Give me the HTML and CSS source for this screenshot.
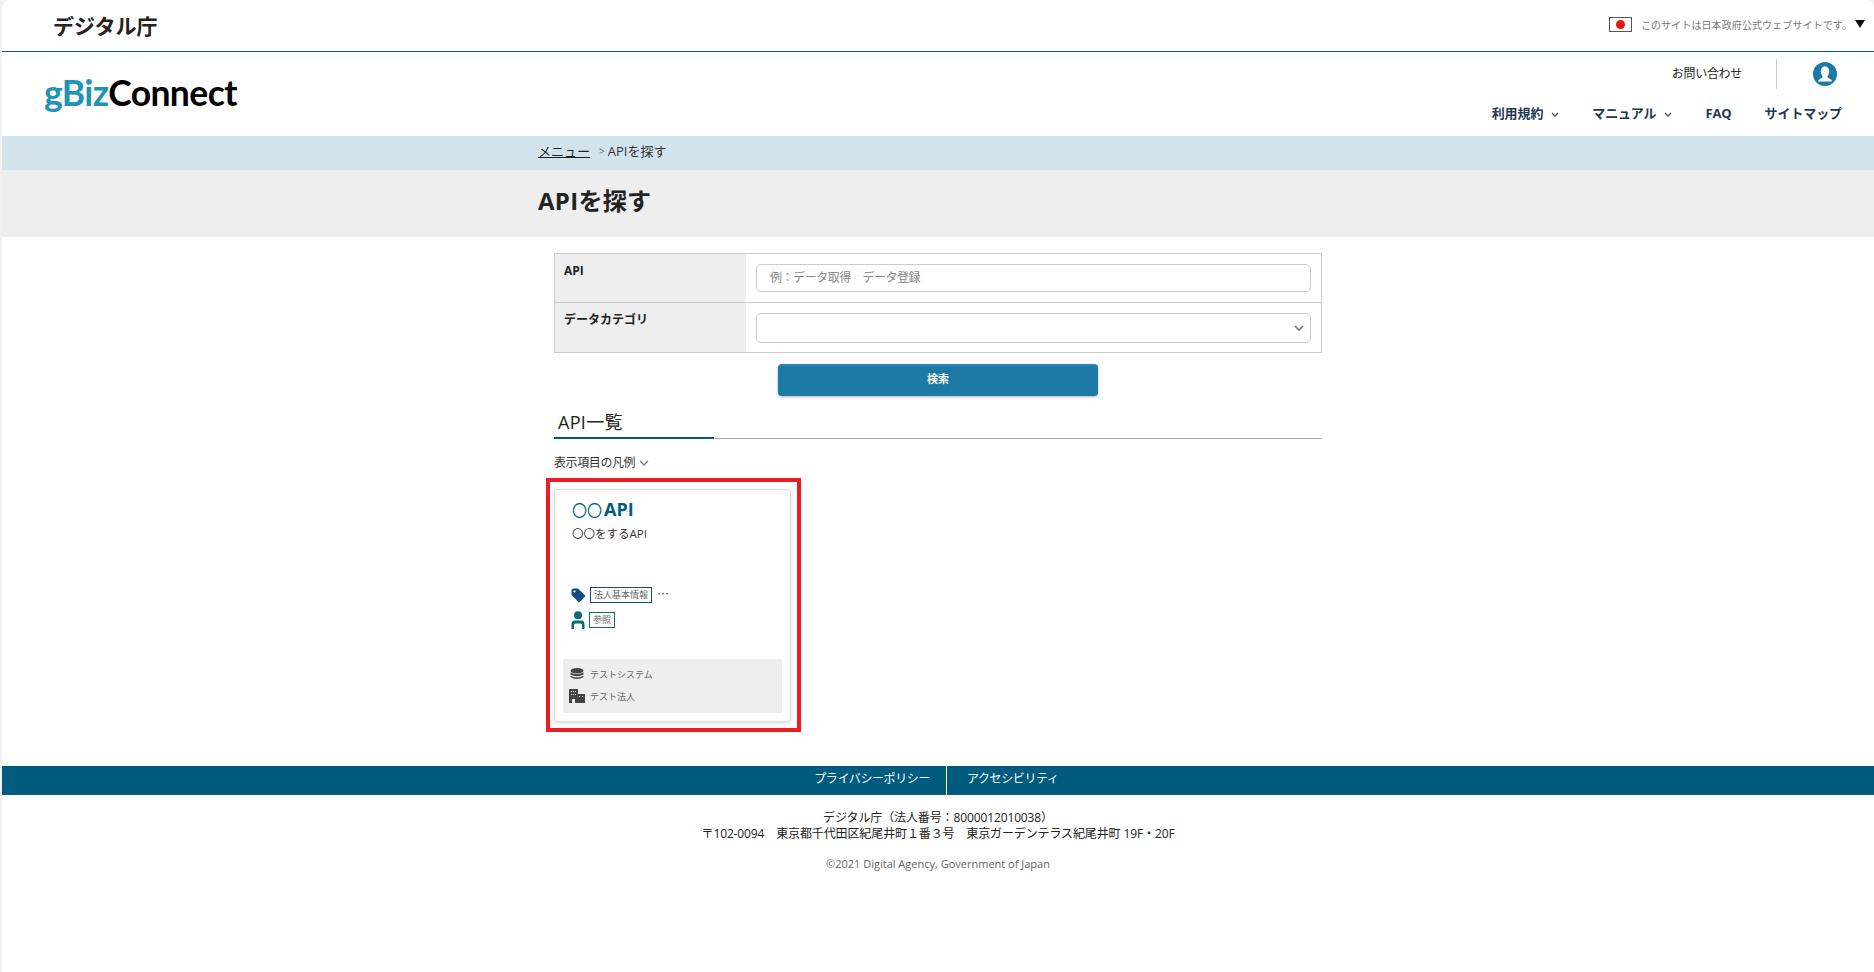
FILE: index.html
```html
<!DOCTYPE html>
<html lang="ja">
<head>
    <meta charset="UTF-8">
    <meta name="viewport" content="width=device-width, initial-scale=1.0">
    <title>APIを探す</title>
    <link rel="stylesheet" href="styles.css">
</head>
<body>
    <div class="page">
        <div class="gov-bar">
            <div class="gov-name">デジタル庁</div>
            <div class="gov-note">
                <span class="flag"><span class="flag-sun"></span></span>
                <span class="gov-text">このサイトは日本政府公式ウェブサイトです。</span>
                <span class="gov-arrow"></span>
            </div>
        </div>

        <header class="site-header">
            <div class="logo"><span class="logo-biz">gBiz</span>Connect</div>
            <div class="header-right">
                <div class="header-top">
                    <a class="contact">お問い合わせ</a>
                    <span class="header-rule"></span>
                    <svg class="user-icon" width="24" height="24" viewBox="0 0 24 24">
                        <circle cx="12" cy="12" r="12" fill="#1b79a6"/>
                        <ellipse cx="12" cy="9.5" rx="4.3" ry="5.2" fill="#fff"/>
                        <path d="M9.8 13.5 L14.2 13.5 L15 16 Q18.5 17 19 19.5 L5 19.5 Q5.5 17 9 16 Z" fill="#fff"/>
                    </svg>
                </div>
                <nav class="main-nav">
                    <a>利用規約<svg class="chev" width="8" height="6" viewBox="0 0 8 6"><path d="M1 1 L4 4 L7 1" fill="none" stroke="#555" stroke-width="1.4"/></svg></a>
                    <a>マニュアル<svg class="chev" width="8" height="6" viewBox="0 0 8 6"><path d="M1 1 L4 4 L7 1" fill="none" stroke="#555" stroke-width="1.4"/></svg></a>
                    <a>FAQ</a>
                    <a>サイトマップ</a>
                </nav>
            </div>
        </header>

        <div class="crumb-band">
            <div class="inner crumbs"><a class="crumb-link">メニュー</a><span class="crumb-sep">&gt;</span><span>APIを探す</span></div>
        </div>
        <div class="title-band">
            <h1 class="inner page-title">APIを探す</h1>
        </div>

        <main class="content">
            <div class="search-table">
                <div class="search-row">
                    <div class="search-label">API</div>
                    <div class="search-cell"><div class="field placeholder">例：データ取得　データ登録</div></div>
                </div>
                <div class="search-row">
                    <div class="search-label">データカテゴリ</div>
                    <div class="search-cell search-cell-last">
                        <div class="field select-field">
                            <svg width="10" height="7" viewBox="0 0 10 7"><path d="M1 1 L5 5 L9 1" fill="none" stroke="#777" stroke-width="1.6"/></svg>
                        </div>
                    </div>
                </div>
            </div>

            <div class="button-row"><button class="search-btn" type="button">検索</button></div>

            <h2 class="section-title"><span>API一覧</span></h2>

            <div class="legend">表示項目の凡例<svg width="10" height="7" viewBox="0 0 10 7"><path d="M1 1 L5 5 L9 1" fill="none" stroke="#777" stroke-width="1.3"/></svg></div>

            <div class="highlight">
                <div class="api-card">
                    <div class="card-main">
                        <div class="card-title"><span class="circles">〇〇</span>API</div>
                        <p class="card-desc">〇〇をするAPI</p>
                        <div class="tag-row tag-row-first">
                            <svg width="15" height="15" viewBox="0 0 15 15"><path d="M0.5 3 Q0.5 0.5 3 0.5 L7 0.5 L14.5 8 L8 14.5 L0.5 7 Z" fill="#0f4c81"/><circle cx="3.5" cy="3.5" r="1.1" fill="#fff"/></svg>
                            <span class="tag tag-blue">法人基本情報</span>
                            <span class="more">…</span>
                        </div>
                        <div class="tag-row">
                            <svg width="14" height="18" viewBox="0 0 14 18"><circle cx="7" cy="4.2" r="4" fill="#0b6a78"/><path d="M0.5 18 L0.5 13 Q0.5 9.5 4 9.5 L10 9.5 Q13.5 9.5 13.5 13 L13.5 18 L11 18 L11 14 Q11 12.5 9.5 12.5 L4.5 12.5 Q3 12.5 3 14 L3 18 Z" fill="#0b6a78"/></svg>
                            <span class="tag tag-teal">参照</span>
                        </div>
                    </div>
                    <div class="card-meta">
                        <div class="meta-row">
                            <svg width="14" height="12" viewBox="0 0 14 12"><ellipse cx="7" cy="2.8" rx="6.5" ry="2.8" fill="#444"/><path d="M0.5 4.5 Q7 8 13.5 4.5 L13.5 6.5 Q7 10 0.5 6.5 Z" fill="#444"/><path d="M0.5 7.8 Q7 11 13.5 7.8 L13.5 9 Q7 13 0.5 9 Z" fill="#444"/></svg>
                            <span>テストシステム</span>
                        </div>
                        <div class="meta-row">
                            <svg width="16" height="14" viewBox="0 0 16 14"><path d="M0 0 H9 V5 H16 V14 H6 V10 H3 V14 H0 Z" fill="#444"/><path d="M2 2 H3 V3 H2 Z M4 2 H5 V3 H4 Z M6 2 H7 V3 H6 Z M2 5 H3 V6 H2 Z M4 5 H5 V6 H4 Z M6 5 H7 V6 H6 Z M10 7 H11 V8 H10 Z M13 7 H14 V8 H13 Z" fill="#eee"/></svg>
                            <span>テスト法人</span>
                        </div>
                    </div>
                </div>
            </div>
        </main>

        <footer class="site-footer">
            <div class="footer-links">
                <a class="footer-link-left">プライバシーポリシー</a>
                <a class="footer-link-right">アクセシビリティ</a>
            </div>
            <div class="footer-address">
                <p>デジタル庁（法人番号：8000012010038）</p>
                <p>〒102-0094　東京都千代田区紀尾井町１番３号　東京ガーデンテラス紀尾井町 19F・20F</p>
            </div>
            <p class="copyright">©2021 Digital Agency, Government of Japan</p>
        </footer>
    </div>
</body>
</html>
```

FILE: styles.css
```css
* {
    box-sizing: border-box;
}
html, body {
    height: 100%;
}
body {
    margin: 0;
    padding-left: 2px;
    background-color: #f1f1f1;
    color: #222;
    font-family: "Open Sans", "Noto Sans CJK JP", sans-serif;
    font-size: 13px;
}
p, h1, h2 {
    margin: 0;
}
.page {
    min-height: 100%;
    background-color: #fff;
    border-radius: 8px 8px 0 0;
}

/* top bar */
.gov-bar {
    height: 52px;
    display: flex;
    justify-content: space-between;
    align-items: center;
    padding: 0 9px 3px 51px;
    border-bottom: 1px solid #005c7f;
}
.gov-name {
    padding-top: 5px;
    font-size: 21px;
    font-weight: 700;
    line-height: 1;
    color: #222;
}
.gov-note {
    display: flex;
    align-items: center;
}
.flag {
    width: 23px;
    height: 15px;
    margin-right: 9px;
    border: 1px solid #555;
    display: flex;
    justify-content: center;
    align-items: center;
}
.flag-sun {
    width: 9px;
    height: 9px;
    border-radius: 50%;
    background-color: #e8141c;
}
.gov-text {
    font-size: 10px;
    letter-spacing: 0.1px;
    color: #777;
}
.gov-arrow {
    width: 0;
    height: 0;
    margin-left: 3px;
    border-left: 5px solid transparent;
    border-right: 5px solid transparent;
    border-top: 8px solid #111;
}

/* header */
.site-header {
    height: 84px;
    display: flex;
    justify-content: space-between;
    padding: 0 32px 0 42px;
}
.logo {
    margin-top: 19px;
    font-family: "Lato", sans-serif;
    font-size: 35.5px;
    font-weight: 700;
    line-height: 44px;
    letter-spacing: -0.6px;
    color: #000;
}
.logo-biz {
    color: #2193b5;
}
.header-right {
    display: flex;
    flex-direction: column;
    align-items: flex-end;
}
.header-top {
    display: flex;
    align-items: center;
    height: 30px;
    margin-top: 7px;
    padding-right: 5px;
}
.contact {
    padding-bottom: 3px;
    font-size: 12px;
    letter-spacing: -0.3px;
    color: #222;
}
.header-rule {
    width: 1px;
    height: 30px;
    margin: 0 36px 0 34px;
    background-color: #ccc;
}
.main-nav {
    display: flex;
    gap: 33px;
    margin-top: 15px;
    font-size: 13px;
    font-weight: 700;
    line-height: 18px;
    letter-spacing: -0.1px;
    color: #1d3a52;
}
.chev {
    margin-left: 8px;
}

/* breadcrumb and title */
.inner {
    width: 800px;
    margin: 0 auto;
}
.crumb-band {
    height: 34px;
    background-color: #d2e3ec;
}
.crumbs {
    display: flex;
    align-items: center;
    height: 34px;
    padding-bottom: 5px;
    font-size: 13px;
    color: #333;
}
.crumb-link {
    text-decoration: underline;
    color: #222;
}
.crumb-sep {
    margin: 0 3px 0 9px;
    font-size: 10px;
    color: #666;
}
.title-band {
    height: 67px;
    background-color: #eee;
}
.page-title {
    font-size: 24px;
    font-weight: 700;
    line-height: 62px;
    letter-spacing: 0.3px;
    color: #222;
}

/* search form */
.content {
    width: 768px;
    margin: 0 auto;
    padding-top: 16px;
}
.search-table {
    border: 1px solid #ccc;
}
.search-row {
    display: flex;
}
.search-row + .search-row {
    border-top: 1px solid #ccc;
}
.search-label {
    width: 191px;
    padding: 8px 9px;
    background-color: #eee;
    font-size: 12px;
    font-weight: 700;
    line-height: 18px;
}
.search-cell {
    flex: 1;
    padding: 10px;
}
.search-cell-last {
    padding-bottom: 9px;
}
.field {
    height: 28px;
    padding: 0 13px;
    border: 1px solid #ccc;
    border-radius: 5px;
    line-height: 26px;
    background-color: #fff;
}
.placeholder {
    color: #888;
    font-size: 12px;
    letter-spacing: -0.45px;
}
.select-field {
    height: 30px;
    display: flex;
    justify-content: flex-end;
    align-items: center;
    padding-right: 6px;
}

.button-row {
    display: flex;
    justify-content: center;
    margin-top: 11px;
}
.search-btn {
    width: 320px;
    height: 32px;
    padding-bottom: 7px;
    border: none;
    border-top: 2px solid #2a84ae;
    border-radius: 4px;
    background-color: #1b79a6;
    box-shadow: 0 1px 3px rgba(0, 0, 0, 0.3);
    color: #fff;
    font-family: inherit;
    font-size: 11px;
    font-weight: 700;
}

.section-title {
    margin-top: 13px;
    border-bottom: 1px solid #aaa;
    font-size: 18px;
    font-weight: 400;
    line-height: 26px;
    letter-spacing: 0.3px;
}
.section-title span {
    display: inline-block;
    width: 160px;
    padding: 0 0 2px 4px;
    margin-bottom: -1px;
    border-bottom: 2px solid #005c7f;
}
.legend {
    margin-top: 14px;
    font-size: 12px;
    line-height: 20px;
    letter-spacing: -0.4px;
    color: #333;
}
.legend svg {
    margin-left: 4px;
}

/* api card */
.highlight {
    width: 255px;
    height: 254px;
    margin: 5px 0 0 -8px;
    padding: 7px 7px 0 4px;
    border: 4px solid #ed1c24;
}
.api-card {
    width: 237px;
    height: 233px;
    padding: 0 8px 8px 8px;
    border: 1px solid #ddd;
    border-radius: 3px;
    box-shadow: 0 1px 4px rgba(0, 0, 0, 0.15);
    display: flex;
    flex-direction: column;
    justify-content: space-between;
}
.card-main {
    padding: 8px 0 0 9px;
}
.card-title {
    font-size: 18px;
    font-weight: 700;
    line-height: 22px;
    color: #005c7f;
}
.circles {
    margin-right: 2px;
    font-size: 15px;
    font-weight: 400;
}
.card-desc {
    margin-top: 3px;
    font-size: 11.5px;
    line-height: 20px;
    color: #333;
}
.tag-row {
    display: flex;
    align-items: center;
    gap: 4px;
    margin: 7px 0 0 -1px;
}
.tag-row-first {
    margin-top: 43px;
}
.tag-row svg {
    flex: none;
    margin-top: 1px;
}
.tag {
    padding: 0 3px;
    font-size: 9px;
    line-height: 14px;
    color: #666;
    background-color: #fff;
}
.tag-blue {
    border: 1px solid #0f4c81;
}
.tag-teal {
    border: 1px solid #0b6a78;
}
.more {
    margin: -3px 0 0 1px;
    font-family: "Noto Sans CJK JP", sans-serif;
    font-size: 12px;
    color: #444;
}
.card-meta {
    height: 54px;
    padding: 4px 0 0 6px;
    background-color: #eee;
    font-size: 9px;
    color: #666;
}
.meta-row {
    display: flex;
    align-items: center;
    gap: 5px;
    height: 22px;
}
.meta-row svg {
    flex: none;
    width: 16px;
}

/* footer */
.site-footer {
    margin-top: 34px;
    text-align: center;
}
.footer-links {
    height: 29px;
    display: flex;
    justify-content: center;
    background-color: #005c7f;
    color: #fff;
    font-size: 12px;
    letter-spacing: -0.4px;
    line-height: 26px;
}
.footer-link-left {
    width: 195px;
    padding-right: 16px;
    text-align: right;
    border-right: 1px solid #fff;
    margin-left: 18px;
}
.footer-link-right {
    width: 195px;
    padding-left: 20px;
    text-align: left;
}
.footer-address {
    margin-top: 15px;
    font-size: 12px;
    line-height: 16px;
    letter-spacing: -0.12px;
    color: #222;
}
.copyright {
    margin-top: 15px;
    font-size: 11px;
    line-height: 14px;
    color: #666;
}
```
